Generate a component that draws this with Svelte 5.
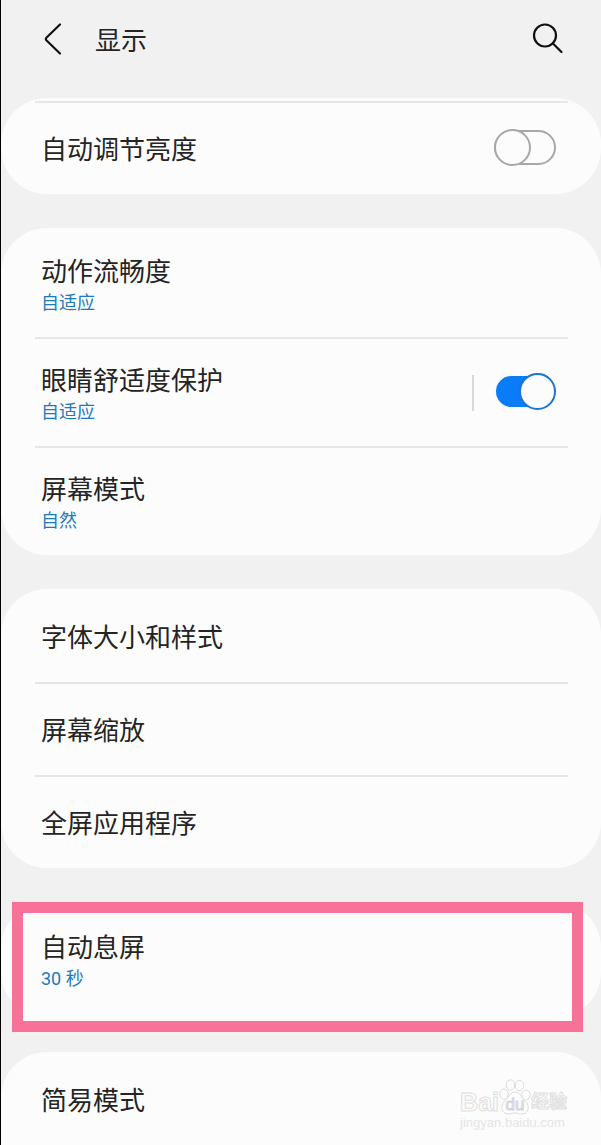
<script>
    let groups = $state([
        {
            scrolled: true,
            rows: [{ id: 'brightness', title: '自动调节亮度', toggle: true, on: false }],
        },
        {
            rows: [
                { id: 'motion', title: '动作流畅度', value: '自适应' },
                { id: 'comfort', title: '眼睛舒适度保护', value: '自适应', toggle: true, split: true, on: true },
                { id: 'mode', title: '屏幕模式', value: '自然' },
            ],
        },
        {
            rows: [
                { id: 'font', title: '字体大小和样式' },
                { id: 'zoom', title: '屏幕缩放' },
                { id: 'fullscreen', title: '全屏应用程序' },
            ],
        },
        {
            highlight: true,
            rows: [{ id: 'timeout', title: '自动息屏', value: '30 秒' }],
        },
        {
            last: true,
            rows: [{ id: 'easy', title: '简易模式' }],
        },
    ]);
</script>

{#snippet text(row)}
    <span class="title">{row.title}</span>
    {#if row.value}
        <span class="value">{row.value}</span>
    {/if}
{/snippet}

<div class="page">
    <header class="header">
        <button class="icon-button" aria-label="返回">
            <svg width="20" height="34" viewBox="0 0 20 34">
                <path d="M17 2.5 3.6 15.5Q2 17 3.6 18.5L17 31.5" />
            </svg>
        </button>
        <h1>显示</h1>
        <button class="icon-button search" aria-label="搜索">
            <svg width="34" height="34" viewBox="0 0 34 34">
                <circle cx="14" cy="13.5" r="11" />
                <path d="M22 21.5 30.5 30" />
            </svg>
        </button>
    </header>

    <main>
        {#each groups as group}
            <section class="card" class:scrolled={group.scrolled} class:highlight={group.highlight} class:last={group.last}>
                {#each group.rows as row (row.id)}
                    <div class="row" class:tall={row.value}>
                        {#if row.toggle}
                            <label class="label" for={row.id}>{@render text(row)}</label>
                            {#if row.split}
                                <span class="split"></span>
                            {/if}
                            <input class="switch" type="checkbox" role="switch" id={row.id} bind:checked={row.on} />
                        {:else}
                            <button class="label">{@render text(row)}</button>
                        {/if}
                    </div>
                {/each}

                {#if group.last}
                    <div class="watermark">
                        <div class="brand">
                            <span>Bai</span>
                            <svg width="32" height="36" viewBox="0 0 32 36">
                                <ellipse cx="5" cy="15" rx="4.2" ry="5" />
                                <ellipse cx="11.5" cy="6" rx="4.2" ry="5.2" />
                                <ellipse cx="20.5" cy="6.5" rx="4.2" ry="5.2" />
                                <ellipse cx="27" cy="16" rx="4.2" ry="5" />
                                <path d="M16 13C11 13 10 18 6 22C0 27 3 35 9 35C12 35 13 34 16 34S20 35 23 35C29 35 32 27 26 22C22 18 21 13 16 13Z" />
                                <text x="16" y="31" text-anchor="middle">du</text>
                            </svg>
                            <span class="cn">经验</span>
                        </div>
                        <div class="site">jingyan.baidu.com</div>
                    </div>
                {/if}
            </section>
        {/each}
    </main>
</div>

<style>
    :global(body) {
        background: #f1f1f1;
    }

    .page {
        display: flex;
        flex-direction: column;
        box-sizing: border-box;
        min-height: 100vh;
        border-left: 1px solid #000;
        font-family: Roboto, "Noto Sans CJK SC", sans-serif;
        color: #242424;
        background: #f1f1f1;
        overflow: hidden;
    }

    .header {
        display: flex;
        align-items: center;
        height: 78px;
        padding: 0 36px 20px 42px;
    }
    h1 {
        margin: 0 0 0 32px;
        padding-top: 4px;
        font-size: 26px;
        font-weight: 400;
        line-height: 34px;
    }

    button {
        padding: 0;
        border: 0;
        font: inherit;
        color: inherit;
        text-align: left;
        background: none;
        cursor: pointer;
    }
    .icon-button {
        display: flex;
    }
    .icon-button svg {
        fill: none;
        stroke: #111;
        stroke-width: 2.2;
        stroke-linecap: round;
    }
    .search {
        margin-left: auto;
    }

    main {
        display: flex;
        flex: 1;
        flex-direction: column;
        gap: 34px;
    }
    .card {
        position: relative;
        padding: 0 33px 0 34px;
        border-radius: 46px;
        background: #fcfcfc;
    }
    .scrolled {
        padding-top: 3px;
    }
    .scrolled .row {
        border-top: 2px solid #e6e6e6;
    }
    .last {
        flex: 1;
        border-radius: 46px 46px 0 0;
    }

    .row {
        display: flex;
        align-items: center;
        height: 91px;
        padding: 0 12px 0 6px;
    }
    .row:not(:only-child):first-child {
        padding-top: 2px;
    }
    .row + .row {
        border-top: 2px solid #e6e6e6;
    }
    .tall {
        height: 107px;
    }
    .highlight .row {
        height: 116px;
    }
    .last .row {
        height: 92px;
    }
    .label {
        display: flex;
        flex: 1;
        flex-direction: column;
        padding-top: 2px;
        cursor: pointer;
    }
    .tall .label {
        padding-top: 4px;
    }
    .title {
        font-size: 26px;
        line-height: 34px;
    }
    .value {
        font-size: 18px;
        line-height: 28px;
        color: #1c7abf;
    }

    .split {
        width: 2px;
        height: 36px;
        margin-right: 20px;
        background: #d8d8d8;
    }
    .switch {
        position: relative;
        width: 62px;
        height: 37px;
        margin: 0 0 2px;
        appearance: none;
        cursor: pointer;
    }
    .switch::before,
    .switch::after {
        content: "";
        position: absolute;
        box-sizing: border-box;
        border: 2px solid #a8a8a8;
        border-radius: 20px;
        background: #fcfcfc;
    }
    .switch::before {
        inset: 1px 0;
    }
    .switch::after {
        top: 0;
        left: 0;
        width: 37px;
        height: 37px;
    }
    .switch:checked::before {
        inset: 3px 2px;
        border-color: #0a7cf8;
        background: #0a7cf8;
    }
    .switch:checked::after {
        left: 25px;
        border-color: #1a76d2;
    }

    /* frame drawn round the row, below its text */
    .highlight {
        isolation: isolate;
    }
    .highlight::after {
        content: "";
        position: absolute;
        z-index: -1;
        inset: 0 18px -14px 11px;
        border: 11px solid #f77199;
        background: #fcfcfc;
    }

    .watermark {
        position: absolute;
        right: 34px;
        bottom: 16px;
        font-family: "Liberation Sans", "Noto Sans CJK SC", sans-serif;
        color: #fcfcfc;
        pointer-events: none;
    }
    .brand {
        display: flex;
        align-items: flex-end;
        font-size: 25px;
        font-weight: 700;
        line-height: 26px;
        -webkit-text-stroke: 1px #dfdfdf;
    }
    .brand svg {
        fill: #fcfcfc;
        stroke: #dcdcdc;
    }
    .brand text {
        font-size: 17px;
        font-weight: 400;
        stroke: #d2d2d2;
    }
    .cn {
        font-size: 18px;
    }
    .site {
        font-size: 13px;
        line-height: 15px;
        color: #e4e4e4;
        -webkit-text-stroke: 0;
    }
</style>
